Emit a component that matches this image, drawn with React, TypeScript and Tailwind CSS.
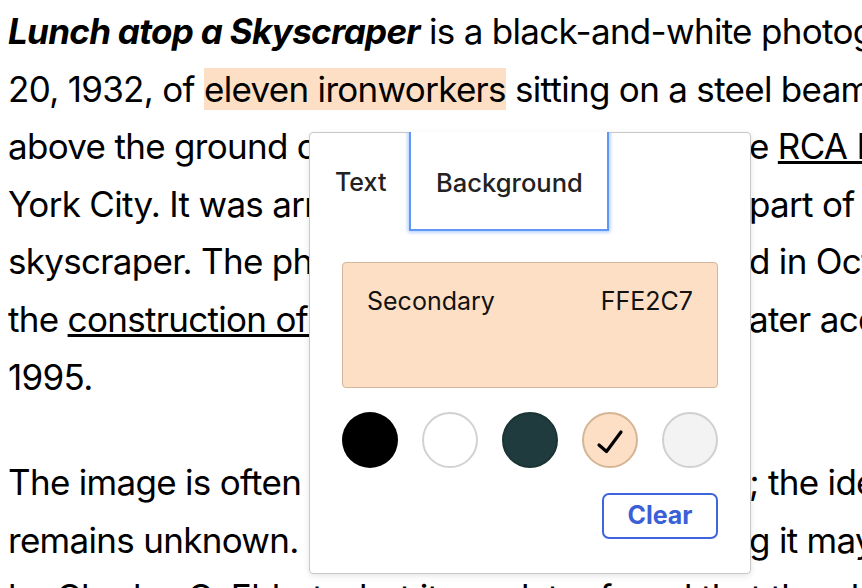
import React from "react";

const Swatch = ({ cls, children }: { cls: string; children?: React.ReactNode }) => (
  <div className={`w-[56px] h-[56px] rounded-full box-border flex items-center justify-center ${cls}`}>{children}</div>
);

const Cut = ({ children }: { children: React.ReactNode }) => (
  <span className="inline-block w-[741px] overflow-hidden align-top whitespace-nowrap">{children}</span>
);

export default function App() {
  return (
    <div className="relative w-[862px] h-[588px] overflow-hidden bg-white text-black" style={{ fontFamily: "Inter, 'Noto Sans', sans-serif" }}>
      <div className="pl-2 pt-[3px] text-[35px] leading-[57.6px] tracking-[-0.7px] whitespace-nowrap">
        <p>
          <em className="font-bold">Lunch atop a Skyscraper</em> is a black-and-white photograph taken on September
          <br />
          20, 1932, of <span className="bg-[#fcdfc4]">eleven ironworkers</span> sitting on a steel beam 840 feet (256 meters)
          <br />
          <Cut>above the ground during the construction of the RCA Building, on the 69th floor of th</Cut>e <span className="underline">RCA Building</span> in Manhattan, New
          <br />
          <Cut>York City. It was arranged as a publicity stunt, a staged shot, </Cut>part of a campaign promoting the
          <br />
          <Cut>skyscraper. The photograph was publishe</Cut>d in October 1932, during
          <br />
          <Cut>the <span className="underline">construction of Rockefeller Center</span>. Corbis l</Cut>ater acquired it in
          <br />
          1995.
        </p>
        <p className="mt-[48px]">
          <Cut>The image is often credited to Charles Ebbets</Cut>; the identity of the photographer
          <br />
          <Cut>remains unknown. Despite a finding</Cut>g it may have been taken
          <br />
          by Charles C. Ebbets, but it was later found that the photograph
        </p>
      </div>

      <div className="absolute left-[309px] top-[132px] w-[442px] h-[442px] bg-white border-[1.5px] border-[#c8c8c8] rounded-[4px] shadow-[0_2px_6px_rgba(0,0,0,0.10)] box-border">
        <div className="flex h-[97px] -mt-[1.5px]">
          <button className="px-[25px] pt-[6px] h-full flex items-center text-[25px] font-medium text-[#222]">Text</button>
          <div className="-mx-[6px] px-[6px] pb-[6px] -mb-[6px] overflow-hidden">
            <button className="w-[196px] h-[97px] pt-[6px] flex items-center justify-center text-[25.5px] font-medium text-[#222] bg-white shadow-[0_0_0_2px_#5f97f6,0_0_4px_3px_#a3c4fb]">
              Background
            </button>
          </div>
        </div>
        <div className="px-[32px] pt-[33px]">
          <div className="h-[126px] box-border border-[1.5px] border-[#d4b79a] rounded-[4px] bg-[#fcdfc4] px-[24px] pt-[20px] flex justify-between text-[25px] leading-[37px] text-[#111]">
            <span>Secondary</span>
            <span>FFE2C7</span>
          </div>
          <div className="mt-[24px] flex justify-between">
            <Swatch cls="bg-black" />
            <Swatch cls="bg-white border-2 border-[#d2d2d2]" />
            <Swatch cls="bg-[#1f3b3d] border-2 border-[#1b3335]" />
            <Swatch cls="bg-[#fcdfc4] border-2 border-[#d4b596]">
              <svg width="52" height="52" viewBox="0 0 52 52">
                <path d="M15 31 L22.5 37.5 L37 18" fill="none" stroke="#000" strokeWidth="3.2" strokeLinecap="round" strokeLinejoin="round" />
              </svg>
            </Swatch>
            <Swatch cls="bg-[#f3f3f3] border-2 border-[#d0d0d0]" />
          </div>
          <div className="mt-[25px] flex justify-end">
            <button className="w-[116px] h-[46px] box-border border-2 border-[#3f65dc] rounded-[7px] text-[25px] font-bold text-[#3b5fd8]">
              Clear
            </button>
          </div>
        </div>
      </div>
    </div>
  );
}
